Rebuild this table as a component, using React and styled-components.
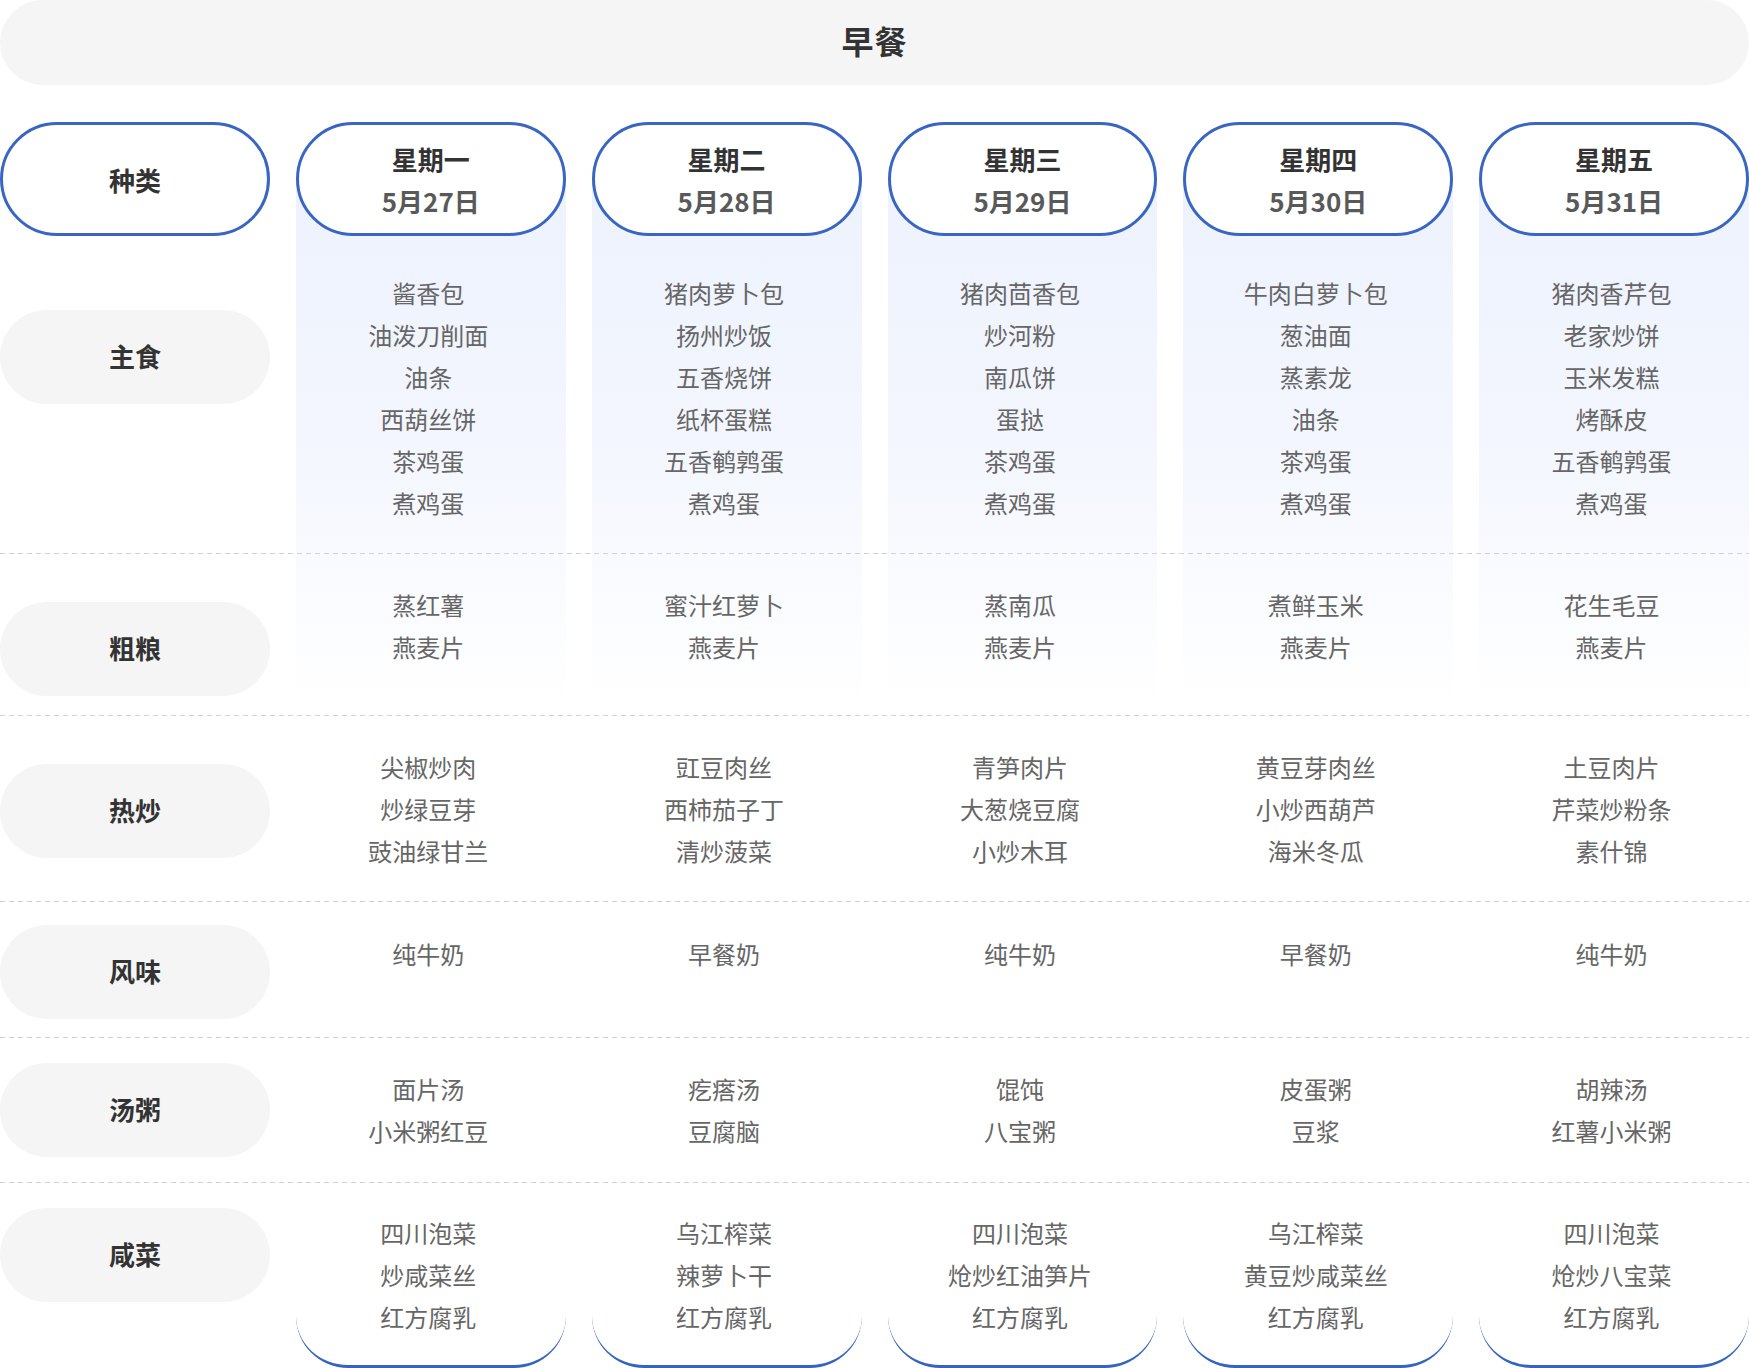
import React from 'react'
import styled, { createGlobalStyle } from 'styled-components'

const GlobalStyle = createGlobalStyle`
  html, body {
    margin: 0;
    padding: 0;
    background: #ffffff;
  }
  body {
    font-family: "Noto Sans CJK SC", "Noto Sans", sans-serif;
    color: #333333;
  }
`

const Page = styled.div`
  width: 1749px;
  height: 1368px;
  overflow: hidden;
`

const TitleBar = styled.div`
  box-sizing: border-box;
  height: 85px;
  padding-bottom: 6px;
  border-radius: 43px;
  background: #f5f5f5;
  display: flex;
  align-items: center;
  justify-content: center;
  font-size: 32px;
  font-weight: 700;
  color: #333333;
  letter-spacing: 1px;
`

const Board = styled.div`
  display: grid;
  grid-template-columns: repeat(6, 1fr);
  grid-template-rows: 114px 317px 162px 186px 136px 145px 186px;
  column-gap: 26px;
  margin-top: 37px;
`

// fondo de cada dia, ocupa todas las filas
const DayCard = styled.div`
  grid-column: ${(p) => p.$col};
  grid-row: 1 / -1;
  margin-top: 57px;
  background: linear-gradient(180deg, #edf2fd 0px, #f3f6fe 260px, #fbfcff 440px, #ffffff 530px);
  border-bottom: 3px solid #3563c0;
  border-radius: 0 0 52px 52px;
`

const HeadPill = styled.div`
  grid-column: ${(p) => p.$col};
  grid-row: 1;
  z-index: 1;
  box-sizing: border-box;
  height: 114px;
  border: 3px solid #3866c2;
  border-radius: 57px;
  background: #ffffff;
  display: flex;
  flex-direction: column;
  align-items: center;
  justify-content: center;
  font-size: 26px;
  font-weight: 700;
  line-height: 41px;
`

const DayName = styled.div`
  color: #333333;
`

const DayDate = styled.div`
  color: #595959;
  margin-top: 1px;
`

const RowLine = styled.div`
  grid-column: 1 / -1;
  grid-row: ${(p) => p.$row};
  align-self: start;
  z-index: 1;
  height: 1px;
  background: repeating-linear-gradient(90deg, #d2d2d2 0 5px, transparent 5px 9px);
`

const LabelPill = styled.div`
  grid-column: 1;
  grid-row: ${(p) => p.$row};
  align-self: start;
  box-sizing: border-box;
  margin-top: ${(p) => p.$top}px;
  height: 94px;
  padding-bottom: 4px;
  border-radius: 47px;
  background: #f5f5f5;
  display: flex;
  align-items: center;
  justify-content: center;
  font-size: 26px;
  font-weight: 700;
  color: #333333;
`

const DishCell = styled.div`
  grid-column: ${(p) => p.$col};
  grid-row: ${(p) => p.$row};
  z-index: 1;
  padding-top: ${(p) => p.$pad}px;
  padding-right: 5px;
  display: flex;
  flex-direction: column;
  align-items: center;
  font-size: 24px;
  line-height: 42px;
  color: #666666;
`

const days = [
  { name: '星期一', date: '5月27日' },
  { name: '星期二', date: '5月28日' },
  { name: '星期三', date: '5月29日' },
  { name: '星期四', date: '5月30日' },
  { name: '星期五', date: '5月31日' },
]

const rows = [
  {
    label: '主食', top: 74, pad: 36,
    items: [
      ['酱香包', '油泼刀削面', '油条', '西葫丝饼', '茶鸡蛋', '煮鸡蛋'],
      ['猪肉萝卜包', '扬州炒饭', '五香烧饼', '纸杯蛋糕', '五香鹌鹑蛋', '煮鸡蛋'],
      ['猪肉茴香包', '炒河粉', '南瓜饼', '蛋挞', '茶鸡蛋', '煮鸡蛋'],
      ['牛肉白萝卜包', '葱油面', '蒸素龙', '油条', '茶鸡蛋', '煮鸡蛋'],
      ['猪肉香芹包', '老家炒饼', '玉米发糕', '烤酥皮', '五香鹌鹑蛋', '煮鸡蛋'],
    ],
  },
  {
    label: '粗粮', top: 49, pad: 31,
    items: [
      ['蒸红薯', '燕麦片'],
      ['蜜汁红萝卜', '燕麦片'],
      ['蒸南瓜', '燕麦片'],
      ['煮鲜玉米', '燕麦片'],
      ['花生毛豆', '燕麦片'],
    ],
  },
  {
    label: '热炒', top: 49, pad: 31,
    items: [
      ['尖椒炒肉', '炒绿豆芽', '豉油绿甘兰'],
      ['豇豆肉丝', '西柿茄子丁', '清炒菠菜'],
      ['青笋肉片', '大葱烧豆腐', '小炒木耳'],
      ['黄豆芽肉丝', '小炒西葫芦', '海米冬瓜'],
      ['土豆肉片', '芹菜炒粉条', '素什锦'],
    ],
  },
  {
    label: '风味', top: 24, pad: 32,
    items: [['纯牛奶'], ['早餐奶'], ['纯牛奶'], ['早餐奶'], ['纯牛奶']],
  },
  {
    label: '汤粥', top: 26, pad: 31,
    items: [
      ['面片汤', '小米粥红豆'],
      ['疙瘩汤', '豆腐脑'],
      ['馄饨', '八宝粥'],
      ['皮蛋粥', '豆浆'],
      ['胡辣汤', '红薯小米粥'],
    ],
  },
  {
    label: '咸菜', top: 26, pad: 30,
    items: [
      ['四川泡菜', '炒咸菜丝', '红方腐乳'],
      ['乌江榨菜', '辣萝卜干', '红方腐乳'],
      ['四川泡菜', '炝炒红油笋片', '红方腐乳'],
      ['乌江榨菜', '黄豆炒咸菜丝', '红方腐乳'],
      ['四川泡菜', '炝炒八宝菜', '红方腐乳'],
    ],
  },
]

const App = () => {
  return (
    <>
      <GlobalStyle />
      <Page>
        <TitleBar>早餐</TitleBar>

        <Board>
          {days.map((d, i) => (
            <DayCard key={`card-${i}`} $col={i + 2} />
          ))}

          {/* cabecera */}
          <HeadPill $col={1}>
            <DayName>种类</DayName>
          </HeadPill>
          {days.map((d, i) => (
            <HeadPill key={`head-${i}`} $col={i + 2}>
              <DayName>{d.name}</DayName>
              <DayDate>{d.date}</DayDate>
            </HeadPill>
          ))}

          {rows.map((row, r) => (
            <React.Fragment key={row.label}>
              {r > 0 && <RowLine $row={r + 2} />}
              <LabelPill $row={r + 2} $top={row.top}>{row.label}</LabelPill>
              {row.items.map((list, c) => (
                <DishCell key={c} $row={r + 2} $col={c + 2} $pad={row.pad}>
                  {list.map((dish, k) => (
                    <div key={k}>{dish}</div>
                  ))}
                </DishCell>
              ))}
            </React.Fragment>
          ))}
        </Board>
      </Page>
    </>
  )
}

export default App
